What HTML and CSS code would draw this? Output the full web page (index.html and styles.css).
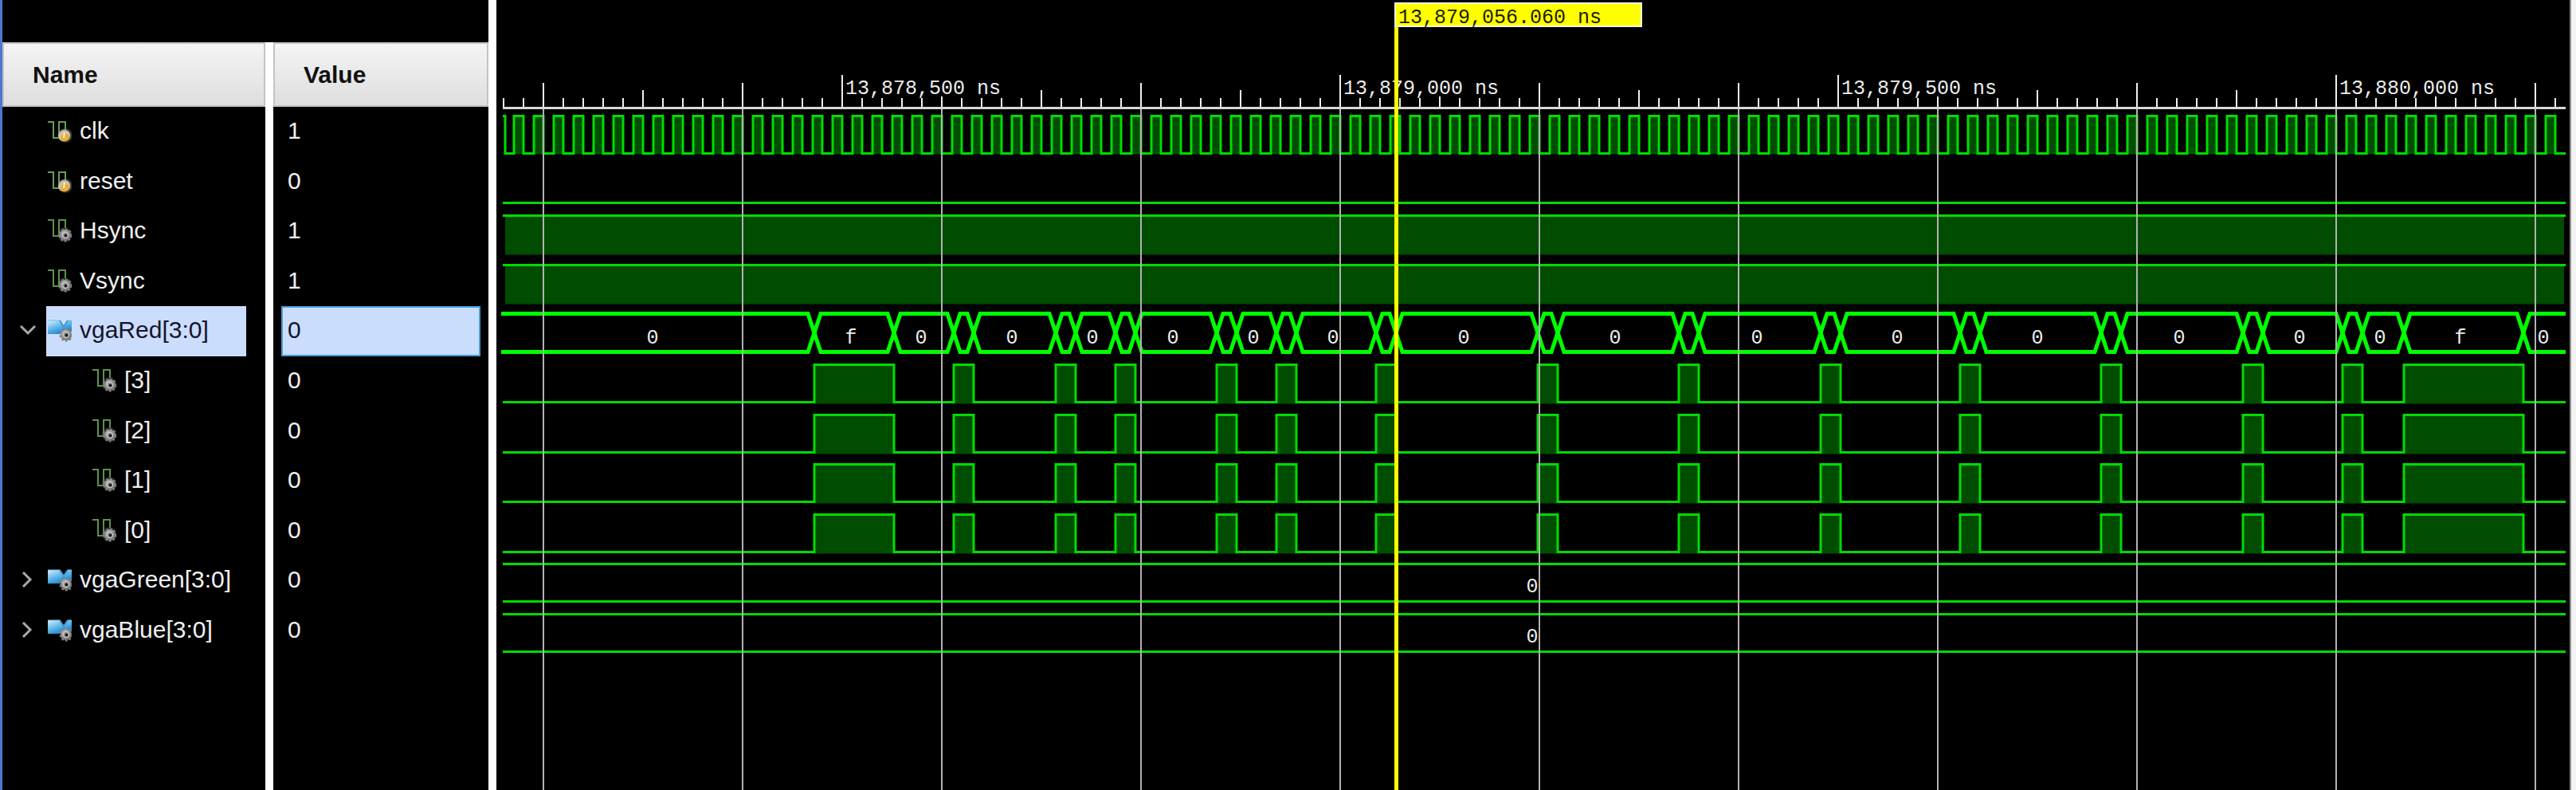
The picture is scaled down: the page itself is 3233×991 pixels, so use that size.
FILE: index.html
```html
<!DOCTYPE html>
<html lang="en">
<head>
<meta charset="utf-8">
<title>Waveform viewer</title>
<link rel="stylesheet" href="styles.css">
</head>
<body>
<svg class="defs" aria-hidden="true">
  <defs>
    <linearGradient id="bus-fill" x1="0" y1="0" x2="0.6" y2="1">
      <stop offset="0" stop-color="#d6effc"/>
      <stop offset="0.4" stop-color="#7cc4ee"/>
      <stop offset="1" stop-color="#0f80cc"/>
    </linearGradient>
    <radialGradient id="gear-fill" cx="0.4" cy="0.35" r="0.7">
      <stop offset="0" stop-color="#c4c4c4"/>
      <stop offset="1" stop-color="#6a6a6a"/>
    </radialGradient>
    <radialGradient id="ball-fill" cx="0.6" cy="0.7" r="0.7">
      <stop offset="0" stop-color="#f2b434"/>
      <stop offset="0.4" stop-color="#e2a83a"/>
      <stop offset="0.7" stop-color="#d3ccb4"/>
      <stop offset="1" stop-color="#a3a39c"/>
    </radialGradient>
    <radialGradient id="halo">
      <stop offset="0.5" stop-color="#777"/>
      <stop offset="1" stop-color="#777" stop-opacity="0"/>
    </radialGradient>
    <symbol id="gear" viewBox="0 0 18 18">
      <circle cx="9" cy="9" r="7" fill="url(#gear-fill)"/>
      <circle cx="9" cy="9" r="7.5" fill="none" stroke="#808080" stroke-width="2" stroke-dasharray="3 2"/>
      <circle cx="9" cy="9" r="3.6" fill="#8c8c8c" stroke="#d4d4d4"/>
      <circle cx="9.5" cy="9.5" r="1.9" fill="#1d1d1d"/>
    </symbol>
    <symbol id="icon-input" viewBox="0 0 30 30">
      <path d="M0 4H7V24H14V4H22V14" fill="none" stroke="#6a9c5a" stroke-width="2"/>
      <circle cx="22" cy="21" r="10" fill="url(#halo)"/>
      <circle cx="20.5" cy="21" r="7.5" fill="url(#ball-fill)"/>
      <path d="M21 17l-1 7" stroke="#fff2c0" stroke-width="2"/>
    </symbol>
    <symbol id="icon-output" viewBox="0 0 30 30">
      <path d="M0 2H7V22H14V2H22V12" fill="none" stroke="#5c924a" stroke-width="2"/>
      <circle cx="21" cy="20" r="10" fill="url(#halo)" opacity="0.7"/>
      <use href="#gear" x="13" y="12" width="18" height="18"/>
    </symbol>
    <symbol id="icon-bus" viewBox="0 0 30 30">
      <path d="M0 3H15L20 9L25 3H30V17H19L15 20H0Z" fill="url(#bus-fill)"/>
      <path d="M15 3L22 15M25 3L16 17" fill="none" stroke="#3f9bd6" stroke-width="2"/>
      <path d="M0 3H15M25 3H30" stroke="#7db7dc" stroke-width="1"/>
      <use href="#gear" x="14" y="12" width="18" height="18"/>
    </symbol>
  </defs>
</svg>

<main class="viewer">
  <section class="panel" aria-label="Signals">
    <div class="panel-top"></div>
    <table class="signals">
      <thead>
        <tr><th scope="col">Name</th><th scope="col">Value</th></tr>
      </thead>
      <tbody>
        <tr><td class="name"><span class="toggle"></span><span class="label"><svg class="icon"><use href="#icon-input"/></svg>clk</span></td><td class="value"><span>1</span></td></tr>
        <tr><td class="name"><span class="toggle"></span><span class="label"><svg class="icon"><use href="#icon-input"/></svg>reset</span></td><td class="value"><span>0</span></td></tr>
        <tr><td class="name"><span class="toggle"></span><span class="label"><svg class="icon"><use href="#icon-output"/></svg>Hsync</span></td><td class="value"><span>1</span></td></tr>
        <tr><td class="name"><span class="toggle"></span><span class="label"><svg class="icon"><use href="#icon-output"/></svg>Vsync</span></td><td class="value"><span>1</span></td></tr>
        <tr class="selected"><td class="name"><button class="toggle" aria-label="Collapse vgaRed" aria-expanded="true"><svg class="chevron" viewBox="0 0 24 24"><path d="M3 7L12 16L21 7"/></svg></button><span class="label"><svg class="icon"><use href="#icon-bus"/></svg>vgaRed[3:0]</span></td><td class="value"><span>0</span></td></tr>
        <tr class="child"><td class="name"><span class="toggle"></span><span class="label"><svg class="icon"><use href="#icon-output"/></svg>[3]</span></td><td class="value"><span>0</span></td></tr>
        <tr class="child"><td class="name"><span class="toggle"></span><span class="label"><svg class="icon"><use href="#icon-output"/></svg>[2]</span></td><td class="value"><span>0</span></td></tr>
        <tr class="child"><td class="name"><span class="toggle"></span><span class="label"><svg class="icon"><use href="#icon-output"/></svg>[1]</span></td><td class="value"><span>0</span></td></tr>
        <tr class="child"><td class="name"><span class="toggle"></span><span class="label"><svg class="icon"><use href="#icon-output"/></svg>[0]</span></td><td class="value"><span>0</span></td></tr>
        <tr><td class="name"><button class="toggle" aria-label="Expand vgaGreen" aria-expanded="false"><svg class="chevron" viewBox="0 0 24 24"><path d="M6 3L15 12L6 21"/></svg></button><span class="label"><svg class="icon"><use href="#icon-bus"/></svg>vgaGreen[3:0]</span></td><td class="value"><span>0</span></td></tr>
        <tr><td class="name"><button class="toggle" aria-label="Expand vgaBlue" aria-expanded="false"><svg class="chevron" viewBox="0 0 24 24"><path d="M6 3L15 12L6 21"/></svg></button><span class="label"><svg class="icon"><use href="#icon-bus"/></svg>vgaBlue[3:0]</span></td><td class="value"><span>0</span></td></tr>
      </tbody>
    </table>
  </section>
  <section class="waves" aria-label="Waveforms">
    <svg id="waves" class="wave-canvas"></svg>
  </section>
</main>
<script src="waves.js"></script>
</body>
</html>
```

FILE: styles.css
```css
* {
  box-sizing: border-box;
}

body {
  margin: 0;
  background: #000;
  color: #f0f0f0;
  font-family: "Liberation Sans", Arial, sans-serif;
  font-size: 30px;
}

.defs {
  position: absolute;
  width: 0;
  height: 0;
}

.viewer {
  display: grid;
  grid-template-columns: 610px 1fr;
  min-height: 100vh;
  border-left: 3px solid #4a78cf;
}

.panel {
  display: flex;
  flex-direction: column;
  background: linear-gradient(to right, #000 330px, #fff 330px, #fff 340px, #000 340px);
}

.panel-top {
  height: 53px;
  background: #000;
}

.signals,
.signals thead {
  display: block;
}

.signals tbody {
  display: grid;
  grid-template-rows: repeat(11, 1fr);
  height: 688px;
}

.signals tr {
  display: grid;
  grid-template-columns: 330px 270px;
  column-gap: 10px;
}

.signals th {
  display: flex;
  align-items: center;
  height: 81px;
  padding: 0 36px;
  border: 2px solid #c2c2c4;
  background: linear-gradient(#f4f4f4, #dededf);
  color: #111;
  font-weight: bold;
}

.signals td {
  display: flex;
  padding: 0;
}

.name {
  gap: 8px;
}

.signals .name {
  padding-left: 17px;
}

.toggle {
  display: flex;
  align-items: center;
  justify-content: center;
  width: 30px;
  padding: 0 0 2px;
  border: 0;
  background: none;
}

.chevron {
  width: 24px;
  height: 24px;
  fill: none;
  stroke: #a8a8a8;
  stroke-width: 3;
}

.label {
  display: flex;
  align-items: center;
  gap: 10px;
  width: 251px;
  padding: 0 0 2px 2px;
  white-space: nowrap;
}

.child .label {
  padding-left: 58px;
}

.icon {
  width: 30px;
  height: 30px;
}

.value span {
  display: flex;
  align-items: center;
  width: 250px;
  margin-left: 10px;
  padding: 0 6px 2px;
  border: 2px solid transparent;
}

.selected .label,
.selected .value span {
  background: #cbddfd;
  color: #14142c;
}

.selected .value span {
  border-color: #4a9ddb;
}

.waves {
  display: flex;
  border-left: 10px solid #fff;
  border-right: 6px solid #f4f4f4;
  min-width: 0;
}

.wave-canvas {
  flex: 1;
  width: 100%;
  min-width: 0;
  border-right: 2px solid #8c8c8c;
  font-family: "Liberation Mono", monospace;
  font-size: 25px;
}

.trace {
  fill: none;
  stroke: #00dc00;
  stroke-width: 3;
}

.level {
  fill: #004c00;
}

.bus {
  fill: none;
  stroke: #00ff00;
  stroke-width: 5;
}

.grid {
  stroke: #b2b2b2;
  stroke-width: 2;
}

.tick {
  stroke: #f0f0f0;
  stroke-width: 2;
}

.baseline {
  fill: #d8d8d8;
}

.mask {
  fill: #000;
}

.wave-text {
  fill: #ececec;
}

.centered {
  text-anchor: middle;
}

.cursor-line {
  stroke: #ffff00;
  stroke-width: 5;
}

.cursor-box {
  fill: #ffff00;
  stroke: #f4f4e0;
  stroke-width: 2;
}

.cursor-text {
  fill: #1c1c00;
}
```

FILE: waves.js
```js
const svg = document.getElementById("waves");

// Times are in ns after 13,878,200 ns.
const BASE = 13878200;
const ORIGIN = 59;
const PX_PER_NS = 1.25;
const LEFT = 8;
const TOP = 134;
const PITCH = 62.5;

const pulses = [
  [272, 352], [412, 432], [514, 534], [574, 594], [676, 696],
  [736, 756], [836, 856], [998, 1018], [1140, 1160], [1282, 1302],
  [1422, 1442], [1564, 1584], [1706, 1726], [1806, 1826], [1868, 1988]
];

const xOf = t => Math.round(ORIGIN + t * PX_PER_NS);
const rowTop = i => Math.floor(TOP + i * PITCH);

function add(tag, cls, attrs, text) {
  const el = document.createElementNS("http://www.w3.org/2000/svg", tag);
  el.setAttribute("class", cls);
  for (const key in attrs) el.setAttribute(key, attrs[key]);
  if (text !== undefined) el.textContent = text;
  svg.appendChild(el);
}

const line = (cls, x1, y1, x2, y2) => add("line", cls, { x1, y1, x2, y2 });
const box = (cls, x, y, width, height) => add("rect", cls, { x, y, width, height });
const label = (cls, x, y, text) => add("text", cls, { x, y }, text);

function drawClock(row, right) {
  const hi = rowTop(row) + 11.5;
  const lo = rowTop(row) + 58.5;
  let d = `M${LEFT} ${hi}H${LEFT + 3}V${lo}`;
  for (let t = -30; xOf(t + 10) < right; t += 20) {
    const a = xOf(t);
    const b = xOf(t + 10);
    box("level", a, hi, b - a, lo - hi + 1);
    d += `H${a}V${hi}H${b}V${lo}`;
  }
  add("path", "trace", { d: d + `H${right}` });
}

function drawLow(row, right) {
  const y = rowTop(row) + 58.5;
  line("trace", LEFT, y, right, y);
}

function drawHigh(row, right) {
  const y = rowTop(row) + 11.5;
  box("level", LEFT + 3, y, right - LEFT - 5, 49);
  line("trace", LEFT, y, right, y);
}

function drawBit(row, right) {
  const hi = rowTop(row) + 11.5;
  const lo = rowTop(row) + 58.5;
  let d = `M${LEFT} ${lo}`;
  for (const [s, e] of pulses) {
    box("level", xOf(s), hi, xOf(e) - xOf(s), lo - hi + 2);
    d += `H${xOf(s)}V${hi}H${xOf(e)}V${lo}`;
  }
  add("path", "trace", { d: d + `H${right}` });
}

function drawBus(row, width, right) {
  const hi = rowTop(row) + 9.5;
  const lo = rowTop(row) + 57.5;
  const mid = (hi + lo) / 2;
  const edges = pulses.flat().map(xOf);
  for (const y of [hi, lo]) {
    let d = `M${LEFT - 2} ${y}`;
    for (const x of edges) d += `H${x - 8}L${x} ${mid}L${x + 8} ${y}`;
    add("path", "bus", { d: d + `H${right}` });
  }
  const stops = [0, ...edges, width];
  for (let i = 0; i < stops.length - 1; i++) {
    if (stops[i + 1] - stops[i] < 30) continue;
    const x = Math.round((stops[i] + stops[i + 1]) / 2) - 4;
    label("wave-text centered", x, rowTop(row) + 47, i % 2 ? "f" : "0");
  }
}

function drawSteadyBus(row, width, right) {
  const top = rowTop(row);
  line("trace", LEFT, top + 11.5, right, top + 11.5);
  line("trace", LEFT, top + 58.5, right, top + 58.5);
  label("wave-text centered", Math.round(width / 2) - 1, top + 47, "0");
}

function drawRuler(right, height) {
  for (let t = -40; xOf(t) < right; t += 20) {
    const time = BASE + t;
    const x = xOf(t);
    let y = 123;
    if (time % 500 === 0) y = 94;
    else if (time % 200 === 0) y = 104;
    else if (time % 100 === 0) y = 113;
    line("tick", x, y, x, 134);
    if (time % 200 === 0) line("grid", x, 136, x, height);
  }
  for (let t = 300; xOf(t) < right; t += 500) {
    const x = xOf(t);
    box("mask", x + 2, 94, 196, 27);
    line("tick", x, 94, x, 134);
    label("wave-text", x + 4, 118, (BASE + t).toLocaleString("en-US") + " ns");
  }
  box("baseline", LEFT, 134, right - LEFT, 3);
}

function drawCursor(height) {
  const x = xOf(856.06) + 1;
  line("cursor-line", x - 0.5, 33, x - 0.5, height);
  box("cursor-box", x - 2, 4, 309, 29);
  label("cursor-text", x + 2, 29, "13,879,056.060 ns");
}

function draw() {
  svg.replaceChildren();
  const width = svg.clientWidth;
  const height = svg.clientHeight;
  const right = width - 5;
  drawClock(0, right);
  drawLow(1, right);
  drawHigh(2, right);
  drawHigh(3, right);
  drawBus(4, width, right);
  for (let row = 5; row < 9; row++) drawBit(row, right);
  drawSteadyBus(9, width, right);
  drawSteadyBus(10, width, right);
  drawRuler(right, height);
  drawCursor(height);
}

draw();
window.addEventListener("resize", draw);
```
